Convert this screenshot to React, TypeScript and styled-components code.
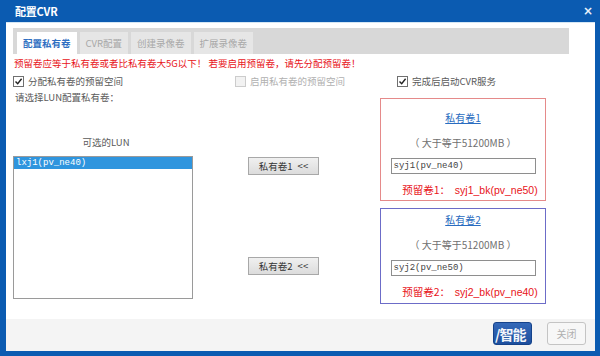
import React from "react";
import styled, { createGlobalStyle } from "styled-components";

const Global = createGlobalStyle`
  html, body { margin: 0; padding: 0; background: #ffffff; }
  body { width: 600px; height: 356px; overflow: hidden; font-family: "Noto Sans CJK SC", "Noto Sans", sans-serif; }
`;

const CJK = `"Noto Sans CJK SC", "Noto Sans", sans-serif`;
const MONO = `"Liberation Mono", "DejaVu Sans Mono", monospace`;

const Dialog = styled.div`
  width: 600px;
  height: 356px;
  box-sizing: border-box;
  background: #0b5bb1;
  display: flex;
  flex-direction: column;
`;

const TitleBar = styled.div`
  height: 22px;
  flex: none;
  display: flex;
  align-items: center;
  justify-content: space-between;
  padding: 0 7px 1px 15px;
  box-sizing: border-box;
  color: #ffffff;
`;

const Title = styled.span`
  font: bold 11px ${CJK};
  letter-spacing: -0.2px;
`;

const CloseX = styled.span`
  font: bold 12px "DejaVu Sans", sans-serif;
  color: #e8f0fa;
  line-height: 1;
`;

const Body = styled.div`
  flex: 1;
  margin: 0 5px 5px 6px;
  background: #ffffff;
  border-top: 1px solid #d4e6f4;
  box-sizing: border-box;
  display: flex;
  flex-direction: column;
  font-family: ${CJK};
  color: #5a5a5a;
`;

const Content = styled.div`
  flex: 1;
  display: flex;
  flex-direction: column;
  padding: 5px 0 0 7px;
`;

const TabBar = styled.div`
  width: 556px;
  height: 26px;
  box-sizing: border-box;
  background: #d8d8d8;
  padding: 4px 0 0 4px;
  display: flex;
  gap: 3px;
`;

const Tab = styled.div<{ $active?: boolean }>`
  height: 22px;
  padding: 0 6px;
  display: flex;
  align-items: center;
  font-size: 9.5px;
  background: ${(p) => (p.$active ? "#ffffff" : "#e6e6e6")};
  color: ${(p) => (p.$active ? "#2f6fc2" : "#a8a8a8")};
  font-weight: ${(p) => (p.$active ? 600 : 400)};
`;

const Warning = styled.div`
  margin: 3px 0 0 1px;
  line-height: 12px;
  font-size: 9.5px;
  color: #e8141a;
  white-space: nowrap;
`;

const CheckRow = styled.div`
  margin-top: 6px;
  height: 12px;
  display: flex;
  align-items: center;
`;

const CheckItem = styled.label<{ $width: number; $disabled?: boolean }>`
  width: ${(p) => p.$width}px;
  display: flex;
  align-items: center;
  gap: 4px;
  font-size: 9.5px;
  color: ${(p) => (p.$disabled ? "#b0b0b0" : "#5a5a5a")};
  white-space: nowrap;
`;

const Box = styled.span<{ $disabled?: boolean }>`
  width: 9px;
  height: 9px;
  border: 1px solid ${(p) => (p.$disabled ? "#cccccc" : "#707070")};
  background: ${(p) => (p.$disabled ? "#f2f2f2" : "#ffffff")};
  display: inline-flex;
  align-items: center;
  justify-content: center;
  flex: none;
`;

const Main = styled.div`
  margin-top: 4px;
  display: flex;
  flex: 1;
`;

const LeftCol = styled.div`
  width: 180px;
  display: flex;
  flex-direction: column;
`;

const Label = styled.div`
  margin-left: 2px;
  line-height: 12px;
  font-size: 9.5px;
  white-space: nowrap;
`;

const ListCaption = styled.div`
  margin-top: 33px;
  line-height: 12px;
  font-size: 9.5px;
  text-align: center;
  padding-left: 6px;
`;

const ListBox = styled.div`
  margin-top: 8px;
  height: 143px;
  border: 1px solid #9a9a9a;
  box-sizing: border-box;
  background: #ffffff;
`;

const ListItem = styled.div<{ $selected?: boolean }>`
  height: 12px;
  line-height: 12px;
  padding-left: 2px;
  font: 9px/12px ${MONO};
  background: ${(p) => (p.$selected ? "#2f95de" : "transparent")};
  color: ${(p) => (p.$selected ? "#ffffff" : "#333333")};
`;

const MidCol = styled.div`
  width: 187px;
  padding: 66px 0 0 55px;
  box-sizing: border-box;
  display: flex;
  flex-direction: column;
  gap: 82px;
  align-items: flex-start;
`;

const MoveButton = styled.button`
  width: 71px;
  height: 18px;
  padding: 0;
  border: 1px solid #a8a8a8;
  background: linear-gradient(#f0f0f0, #dcdcdc);
  font: 9.5px ${CJK};
  color: #333333;
  display: flex;
  align-items: center;
  justify-content: center;
  gap: 5px;
`;

const RightCol = styled.div`
  width: 166px;
  padding-top: 7px;
  display: flex;
  flex-direction: column;
  gap: 7px;
`;

const VolBox = styled.div<{ $color: string; $h: number; $pt: number }>`
  height: ${(p) => p.$h}px;
  box-sizing: border-box;
  border: 1px solid ${(p) => p.$color};
  padding-top: ${(p) => p.$pt}px;
  display: flex;
  flex-direction: column;
  align-items: center;
`;

const VolTitle = styled.a`
  font-size: 10px;
  line-height: 13px;
  color: #2a6cc0;
  text-decoration: underline;
`;

const VolSize = styled.div`
  margin-top: 12px;
  font-size: 10px;
  line-height: 13px;
  color: #707070;
  white-space: pre;
`;

const VolInput = styled.div`
  margin-top: 9px;
  width: 145px;
  height: 16px;
  box-sizing: border-box;
  border: 1px solid #8e8e8e;
  font: 9px/14px ${MONO};
  color: #444444;
  padding-left: 2px;
`;

const Reserve = styled.div`
  margin-top: 9px;
  padding-left: 14px;
  font-size: 10.5px;
  line-height: 13px;
  color: #e8141a;
  white-space: pre;
`;

const ReserveValue = styled.span`
  font-family: "Liberation Sans", Arial, sans-serif;
`;

const Footer = styled.div`
  height: 32px;
  flex: none;
  background: #f4f4f4;
  display: flex;
  justify-content: flex-end;
  align-items: flex-start;
  padding: 3px 9px 0 0;
  gap: 15px;
  box-sizing: border-box;
`;

const FootButton = styled.button<{ $primary?: boolean }>`
  position: relative;
  width: 39px;
  height: 23px;
  padding: 0;
  border-radius: 3px;
  border: 1px solid ${(p) => (p.$primary ? "#15428a" : "#c4c4c4")};
  background: ${(p) => (p.$primary ? "linear-gradient(#3468b8, #1c4f9e)" : "#f7f7f7")};
  color: ${(p) => (p.$primary ? "#ffffff" : "#b0b0b0")};
  font: 10px ${CJK};
  display: flex;
  align-items: center;
  justify-content: center;
`;

const Watermark = styled.span`
  position: absolute;
  left: 1px;
  top: 1px;
  font: bold 14px ${CJK};
  color: #ffffff;
  letter-spacing: -1px;
  white-space: nowrap;
  opacity: 0.95;
`;

const Check = () => (
  <svg width="9" height="9" viewBox="0 0 9 9">
    <path d="M1.5 4.5 L3.7 6.8 L7.6 1.8" fill="none" stroke="#222" strokeWidth="1.4" />
  </svg>
);

export default function App() {
  return (
    <>
      <Global />
      <Dialog>
        <TitleBar>
          <Title>配置CVR</Title>
          <CloseX>×</CloseX>
        </TitleBar>
        <Body>
          <Content>
            <TabBar>
              <Tab $active>配置私有卷</Tab>
              <Tab>CVR配置</Tab>
              <Tab>创建录像卷</Tab>
              <Tab>扩展录像卷</Tab>
            </TabBar>
            <Warning>预留卷应等于私有卷或者比私有卷大5G以下！ 若要启用预留卷，请先分配预留卷！</Warning>
            <CheckRow>
              <CheckItem $width={222}>
                <Box>
                  <Check />
                </Box>
                分配私有卷的预留空间
              </CheckItem>
              <CheckItem $width={162} $disabled>
                <Box $disabled />
                启用私有卷的预留空间
              </CheckItem>
              <CheckItem $width={160}>
                <Box>
                  <Check />
                </Box>
                完成后启动CVR服务
              </CheckItem>
            </CheckRow>
            <Main>
              <LeftCol>
                <Label>请选择LUN配置私有卷：</Label>
                <ListCaption>可选的LUN</ListCaption>
                <ListBox>
                  <ListItem $selected>lxj1(pv_ne40)</ListItem>
                </ListBox>
              </LeftCol>
              <MidCol>
                <MoveButton>
                  <span>私有卷1</span>
                  <span>&lt;&lt;</span>
                </MoveButton>
                <MoveButton>
                  <span>私有卷2</span>
                  <span>&lt;&lt;</span>
                </MoveButton>
              </MidCol>
              <RightCol>
                <VolBox $color="#e58a8a" $h={103} $pt={12}>
                  <VolTitle>私有卷1</VolTitle>
                  <VolSize>（ 大于等于51200MB ）</VolSize>
                  <VolInput>syj1(pv_ne40)</VolInput>
                  <Reserve>
                    预留卷1：  <ReserveValue>syj1_bk(pv_ne50)</ReserveValue>
                  </Reserve>
                </VolBox>
                <VolBox $color="#6c6cc8" $h={96} $pt={4}>
                  <VolTitle>私有卷2</VolTitle>
                  <VolSize>（ 大于等于51200MB ）</VolSize>
                  <VolInput>syj2(pv_ne50)</VolInput>
                  <Reserve>
                    预留卷2：  <ReserveValue>syj2_bk(pv_ne40)</ReserveValue>
                  </Reserve>
                </VolBox>
              </RightCol>
            </Main>
          </Content>
          <Footer>
            <FootButton $primary>
              <Watermark>/智能</Watermark>
            </FootButton>
            <FootButton>关闭</FootButton>
          </Footer>
        </Body>
      </Dialog>
    </>
  );
}
